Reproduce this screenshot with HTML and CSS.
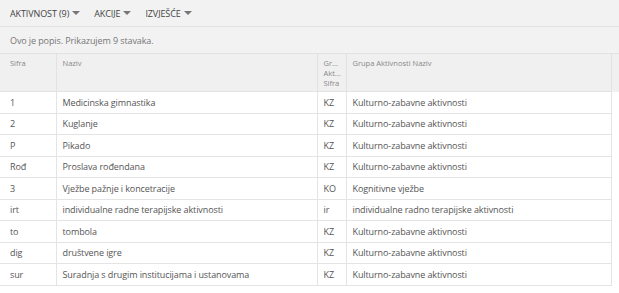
FILE: index.html
```html
<!DOCTYPE html>
<html lang="hr">
<head>
    <meta charset="UTF-8">
    <title>Aktivnost</title>
    <link rel="stylesheet" href="styles.css">
</head>
<body>
    <div class="toolbar">
        <span class="menu">AKTIVNOST (9) <span class="caret"></span></span>
        <span class="menu">AKCIJE <span class="caret"></span></span>
        <span class="menu">IZVJEŠĆE <span class="caret"></span></span>
    </div>
    <div class="info">Ovo je popis. Prikazujem 9 stavaka.</div>
    <table class="grid">
        <colgroup>
            <col class="c-sifra">
            <col class="c-naziv">
            <col class="c-grupa">
            <col class="c-grupa-naziv">
            <col class="c-gutter">
        </colgroup>
        <thead>
            <tr>
                <th>Sifra</th>
                <th>Naziv</th>
                <th>Gr...<br>Akt...<br>Sifra</th>
                <th>Grupa Aktivnosti Naziv</th>
                <th class="gutter"></th>
            </tr>
        </thead>
        <tbody>
            <tr><td>1</td><td>Medicinska gimnastika</td><td>KZ</td><td>Kulturno-zabavne aktivnosti</td><td class="gutter"></td></tr>
            <tr><td>2</td><td>Kuglanje</td><td>KZ</td><td>Kulturno-zabavne aktivnosti</td><td class="gutter"></td></tr>
            <tr><td>P</td><td>Pikado</td><td>KZ</td><td>Kulturno-zabavne aktivnosti</td><td class="gutter"></td></tr>
            <tr><td>Rođ</td><td>Proslava rođendana</td><td>KZ</td><td>Kulturno-zabavne aktivnosti</td><td class="gutter"></td></tr>
            <tr><td>3</td><td>Vježbe pažnje i koncetracije</td><td>KO</td><td>Kognitivne vježbe</td><td class="gutter"></td></tr>
            <tr><td>irt</td><td>individualne radne terapijske aktivnosti</td><td>ir</td><td>individualne radno terapijske aktivnosti</td><td class="gutter"></td></tr>
            <tr><td>to</td><td>tombola</td><td>KZ</td><td>Kulturno-zabavne aktivnosti</td><td class="gutter"></td></tr>
            <tr><td>dig</td><td>društvene igre</td><td>KZ</td><td>Kulturno-zabavne aktivnosti</td><td class="gutter"></td></tr>
            <tr><td>sur</td><td>Suradnja s drugim institucijama i ustanovama</td><td>KZ</td><td>Kulturno-zabavne aktivnosti</td><td class="gutter"></td></tr>
        </tbody>
    </table>
</body>
</html>
```

FILE: styles.css
```css
body {
    margin: 0;
    font-family: "Open Sans", Arial, sans-serif;
    font-size: 9px;
    letter-spacing: -0.1px;
    color: #555;
    background: #fff;
}
.toolbar {
    height: 26px;
    padding: 0 10px;
    display: flex;
    align-items: center;
    gap: 14px;
    background: #f2f2f2;
    border-bottom: 1px solid #e2e2e2;
    color: #444;
}
.menu {
    display: flex;
    align-items: center;
    gap: 3px;
}
.caret {
    display: inline-block;
    width: 0;
    height: 0;
    border-left: 4px solid transparent;
    border-right: 4px solid transparent;
    border-top: 4px solid #777;
}
.info {
    height: 26px;
    padding: 0 10px;
    display: flex;
    align-items: center;
    background: #f2f2f2;
    border-bottom: 1px solid #e2e2e2;
    color: #777;
}
.grid {
    width: 619px;
    border-collapse: collapse;
    table-layout: fixed;
}
.c-sifra { width: 56px; }
.c-naziv { width: 261px; }
.c-grupa { width: 29px; }
.c-grupa-naziv { width: 265px; }
.c-gutter { width: 8px; }
.grid th {
    background: #f0f0f0;
    color: #888;
    font-weight: normal;
    font-size: 7.5px;
    letter-spacing: 0;
    line-height: 10px;
    text-align: left;
    vertical-align: top;
    padding: 4px 6px 3px;
    height: 30px;
    border-right: 1px solid #e2e2e2;
    border-bottom: 1px solid #e2e2e2;
}
.grid td {
    height: 20.5px;
    padding: 0 6px;
    white-space: nowrap;
    overflow: hidden;
    border-right: 1px solid #e4e4e4;
    border-bottom: 1px solid #e4e4e4;
}
.grid th:first-child,
.grid td:first-child {
    padding-left: 10px;
}
.grid .gutter {
    border: none;
    padding: 0;
}
.grid td.gutter {
    background: #fff;
}
```
